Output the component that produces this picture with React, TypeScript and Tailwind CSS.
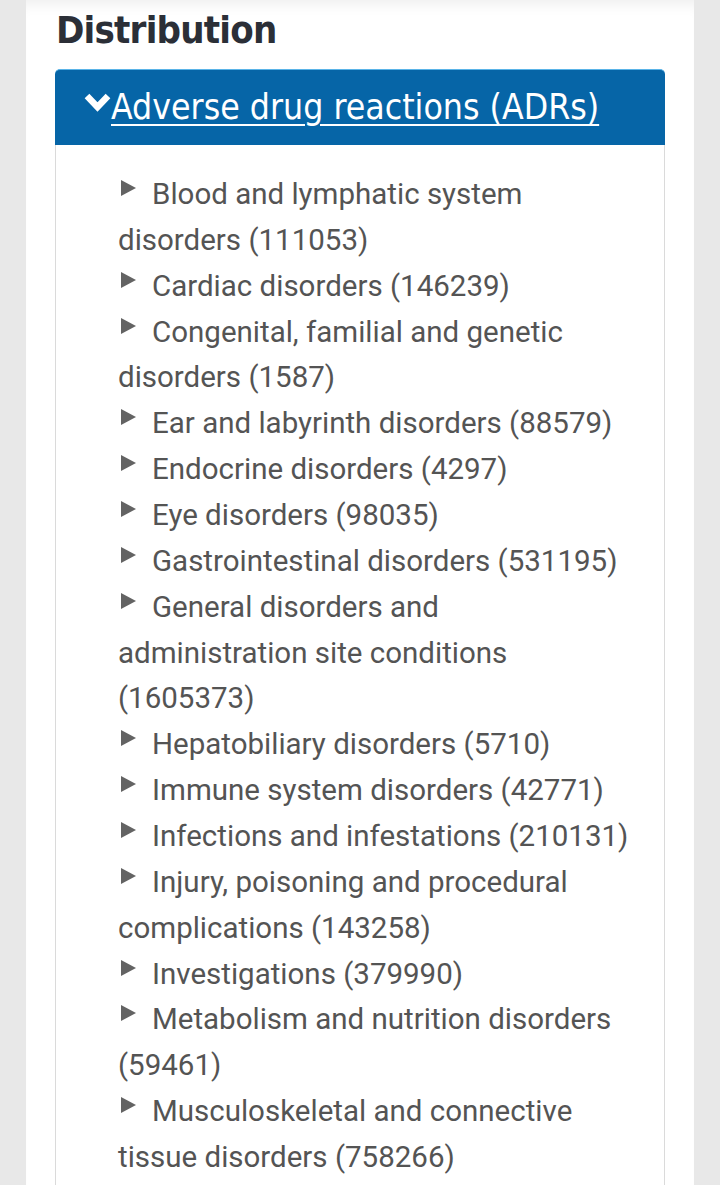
import React from 'react';

const items: string[][] = [
  ['Blood and lymphatic system', 'disorders (111053)'],
  ['Cardiac disorders (146239)'],
  ['Congenital, familial and genetic', 'disorders (1587)'],
  ['Ear and labyrinth disorders (88579)'],
  ['Endocrine disorders (4297)'],
  ['Eye disorders (98035)'],
  ['Gastrointestinal disorders (531195)'],
  ['General disorders and', 'administration site conditions', '(1605373)'],
  ['Hepatobiliary disorders (5710)'],
  ['Immune system disorders (42771)'],
  ['Infections and infestations (210131)'],
  ['Injury, poisoning and procedural', 'complications (143258)'],
  ['Investigations (379990)'],
  ['Metabolism and nutrition disorders', '(59461)'],
  ['Musculoskeletal and connective', 'tissue disorders (758266)'],
];

function Arrow() {
  return (
    <svg width="15" height="16" viewBox="0 0 15 16" className="inline-block align-[8px] ml-[3px] mr-[16px]">
      <polygon points="0,0 15,8 0,16" fill="#636363" />
    </svg>
  );
}

export default function App() {
  return (
    <div className="h-[1185px] overflow-hidden bg-[#e8e8e8] flex justify-center">
      <div className="w-[668px] bg-white shadow-[inset_0_14px_14px_-10px_rgba(0,0,0,0.07)] pl-[29px] pr-[29px]">
        <h2 className="font-['DejaVu_Sans_Condensed','DejaVu_Sans',sans-serif] font-bold text-[38px] tracking-[-0.8px] leading-[60px] text-[#2b2f37] pl-[1px]">
          Distribution
        </h2>

        <div className="mt-[9px]">
          {/* entête bleue */}
          <div className="h-[76px] bg-[#0665a7] rounded-t-[5px] border-t border-[#5ab4e8] flex items-center pl-[29px]">
            <svg width="27" height="20" viewBox="0 0 27 20" className="mb-[12px]">
              <polyline points="3,4 13.5,15 24,4" fill="none" stroke="white" strokeWidth="6.5" strokeLinejoin="miter" />
            </svg>
            <a className="font-['DejaVu_Sans_Condensed','DejaVu_Sans',sans-serif] font-light text-[35.3px] text-white underline underline-offset-[5px] decoration-[1.5px]">
              Adverse drug reactions (ADRs)
            </a>
          </div>

          {/* liste */}
          <div className="h-[1100px] border-x border-[#dadada] pt-[27px] pl-[62px] font-['Roboto',sans-serif] text-[29.5px] leading-[45.86px] text-[#545454]">
            <ul>
              {items.map((lines, i) => (
                <li key={i}>
                  {lines.map((l, j) => (
                    <div key={j} className="whitespace-nowrap">
                      {j === 0 && <Arrow />}
                      {l}
                    </div>
                  ))}
                </li>
              ))}
            </ul>
          </div>
        </div>
      </div>
    </div>
  );
}
